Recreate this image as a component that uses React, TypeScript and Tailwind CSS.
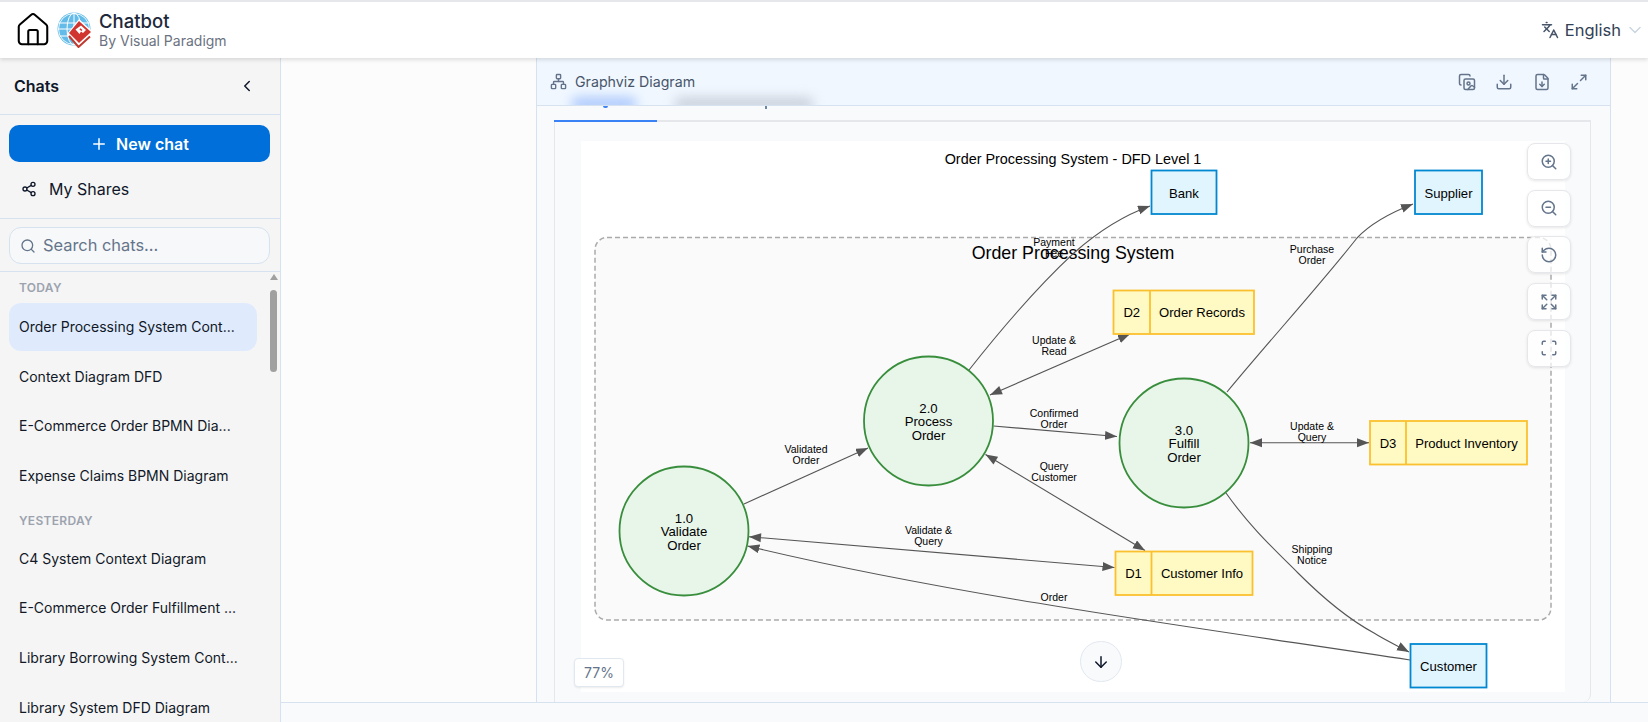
import React from "react";
import {
  ArrowDown,
  ChevronDown,
  ChevronLeft,
  Download,
  Expand,
  FileDown,
  House,
  Languages,
  Maximize2,
  Network,
  Plus,
  RotateCcw,
  Scan,
  Search,
  Share2,
  ZoomIn,
  ZoomOut,
} from "lucide-react";

const todayChats = [
  "Order Processing System Cont...",
  "Context Diagram DFD",
  "E-Commerce Order BPMN Dia...",
  "Expense Claims BPMN Diagram",
];

const yesterdayChats = [
  "C4 System Context Diagram",
  "E-Commerce Order Fulfillment ...",
  "Library Borrowing System Cont...",
  "Library System DFD Diagram",
];

const Logo = () => (
  <svg width="36" height="36" viewBox="0 0 36 36" className="shrink-0">
    <circle cx="17" cy="17" r="16.5" fill="#62bbe8" />
    <g fill="none" stroke="#ffffff" strokeWidth="1">
      <circle cx="17" cy="17" r="15.5" stroke="#e8f6fd" />
      <ellipse cx="17" cy="17" rx="7" ry="16" />
      <path d="M17 1v32M2 11h30M1 17h32M3 24h28" />
    </g>
    <path d="M22 7L36 20L22 37L10 22z" fill="#ffffff" />
    <path d="M12 24L21.500 35L33 24.500" fill="none" stroke="#c0392f" strokeWidth="2" />
    <path d="M22 9L34 20L22 31L12 21z" fill="#d1352f" />
    <path d="M18.500 17.500L24 13.500L29 18L26 21L24 19.500L22.500 22z" fill="#ffffff" />
    <path d="M23.500 16.200L25.500 18L24.300 19L22.300 17.300z" fill="#d1352f" />
  </svg>
);

const ImageCopyIcon = () => (
  <svg width="18" height="18" viewBox="0 0 24 24" fill="none" stroke="currentColor" strokeWidth="2" strokeLinecap="round" strokeLinejoin="round">
    <path d="M4 16a2 2 0 0 1-2-2V4a2 2 0 0 1 2-2h10a2 2 0 0 1 2 2" />
    <rect x="8" y="8" width="14" height="14" rx="2" />
    <circle cx="14" cy="14" r="2" />
    <path d="M22 19l-2.500-2a1.500 1.500 0 0 0-2 0L13 22" />
  </svg>
);

const SideRow = ({ label, active }: { label: string; active?: boolean }) => (
  <div
    className={`mb-[1.7px] flex h-12 items-center rounded-xl px-2.5 text-sm text-[#111827] ${
      active ? "bg-[#dfebfd]" : ""
    }`}
  >
    <span className="truncate">{label}</span>
  </div>
);

const Edge = ({ d, both }: { d: string; both?: boolean }) => (
  <path
    d={d}
    fill="none"
    stroke="#555555"
    strokeWidth="1.1"
    markerEnd="url(#arrow)"
    markerStart={both ? "url(#arrowStart)" : undefined}
  />
);

const Label = ({ x, y, lines, size = 10.5 }: { x: number; y: number; lines: string[]; size?: number }) => (
  <>
    {lines.map((line, i) => (
      <text
        key={i}
        x={x}
        y={y + i * (size > 11 ? 13.500 : 11.700) + size * 0.36}
        textAnchor="middle"
        fontSize={size}
        fill="#000000"
      >
        {line}
      </text>
    ))}
  </>
);

const Circle = ({ cx, cy, lines }: { cx: number; cy: number; lines: string[] }) => (
  <>
    <circle cx={cx} cy={cy} r="64.500" fill="#e8f5e9" stroke="#388e3c" strokeWidth="1.8" />
    <Label x={cx} y={cy - 13} lines={lines} size={13.2} />
  </>
);

const External = ({ x, y, w, label }: { x: number; y: number; w: number; label: string }) => (
  <>
    <rect x={x} y={y} width={w} height="43.500" fill="#e1f5fe" stroke="#0288d1" strokeWidth="1.8" />
    <Label x={x + w / 2} y={y + 22.500} lines={[label]} size={13.1} />
  </>
);

const Store = ({ x, y, w, split, id, label }: { x: number; y: number; w: number; split: number; id: string; label: string }) => (
  <>
    <rect x={x} y={y} width={w} height="43.500" fill="#fff9c4" stroke="#fbc02d" strokeWidth="1.8" />
    <line x1={split} y1={y} x2={split} y2={y + 43.5} stroke="#fbc02d" strokeWidth="1.8" />
    <Label x={(x + split) / 2} y={y + 22} lines={[id]} size={13.1} />
    <Label x={(split + x + w) / 2} y={y + 22} lines={[label]} size={13.1} />
  </>
);

const Diagram = () => (
  <svg
    width="984"
    height="551"
    viewBox="581 141 984 551"
    className="block"
    fontFamily='"Liberation Sans", Arial, sans-serif'
  >
    <defs>
      <marker id="arrow" markerUnits="userSpaceOnUse" markerWidth="13" markerHeight="10" refX="12" refY="4.500" orient="auto">
        <path d="M0 0L12 4.500L0 9z" fill="#555555" />
      </marker>
      <marker id="arrowStart" markerUnits="userSpaceOnUse" markerWidth="13" markerHeight="10" refX="0" refY="4.500" orient="auto">
        <path d="M12 0L0 4.500L12 9z" fill="#555555" />
      </marker>
    </defs>

    <Label x={1073} y={158.500} lines={["Order Processing System - DFD Level 1"]} size={14.4} />
    <rect x="595" y="237.500" width="956" height="382.500" rx="12" fill="#fafafa" stroke="#aaaaaa" strokeWidth="1.5" strokeDasharray="5 3" />
    <Label x={1073} y={253} lines={["Order Processing System"]} size={17.8} />

    <Edge d="M744 504L868 448" />
    <Edge d="M993.500 426L1117 436.500" />
    <Edge both d="M990 395L1130 334" />
    <Edge d="M969 370C1010 318 1050 275 1075 252C1100 230 1125 215 1150 206" />
    <Edge d="M1227 392C1270 340 1320 285 1357 238C1372 222 1395 211 1413 204" />
    <Edge both d="M1250 442.700L1369 442.700" />
    <Edge both d="M985.500 454.500L1145 550.500" />
    <Edge both d="M749 536.700L1114.500 567.500" />
    <Edge d="M1410 660C1200 628 950 595 747.500 546" />
    <Edge d="M1226 493C1250 527 1275 550 1298 573C1325 600 1350 620 1374 633C1385 640 1398 646 1409 652" />

    <Circle cx={684} cy={531} lines={["1.0", "Validate", "Order"]} />
    <Circle cx={928.5} cy={421} lines={["2.0", "Process", "Order"]} />
    <Circle cx={1184} cy={443} lines={["3.0", "Fulfill", "Order"]} />

    <External x={1151.500} y={170.500} w={65} label="Bank" />
    <External x={1415} y={170.500} w={67} label="Supplier" />
    <External x={1410.500} y={644} w={76} label="Customer" />

    <Store x={1113.500} y={290.500} w={140.500} split={1150} id="D2" label="Order Records" />
    <Store x={1370} y={421} w={157} split={1406} id="D3" label="Product Inventory" />
    <Store x={1115.500} y={551.500} w={137} split={1151.500} id="D1" label="Customer Info" />

    <Label x={806} y={449} lines={["Validated", "Order"]} />
    <Label x={928.5} y={530} lines={["Validate &", "Query"]} />
    <Label x={1054} y={242} lines={["Payment", "Fee"]} />
    <Label x={1054} y={340} lines={["Update &", "Read"]} />
    <Label x={1054} y={413} lines={["Confirmed", "Order"]} />
    <Label x={1054} y={466} lines={["Query", "Customer"]} />
    <Label x={1054} y={597} lines={["Order"]} />
    <Label x={1312} y={249} lines={["Purchase", "Order"]} />
    <Label x={1312} y={426} lines={["Update &", "Query"]} />
    <Label x={1312} y={549} lines={["Shipping", "Notice"]} />
  </svg>
);

const zoomTools = [ZoomIn, ZoomOut, RotateCcw, Expand, Scan];

export default function App() {
  return (
    <div className="flex h-[722px] w-[1648px] flex-col overflow-hidden bg-[#fcfcfd] font-['Inter',sans-serif] text-[#0f172a]">
      <header className="relative z-20 flex h-[58px] shrink-0 items-center border-t-2 border-[#e5e7eb] bg-white pl-[15px] pr-[3px] shadow-[0_2px_4px_rgba(0,0,0,0.12)]">
        <House size={38} strokeWidth={1.3} className="-ml-[1px] text-black" />
        <div className="ml-[5px]">
          <Logo />
        </div>
        <div className="ml-[6px] flex flex-col">
          <span className="text-[18.5px] font-medium leading-[22px] text-[#1e293b]">Chatbot</span>
          <span className="text-sm leading-[18px] text-[#6b7280]">By Visual Paradigm</span>
        </div>
        <div className="ml-auto flex items-center text-[#475569]">
          <Languages size={18} />
          <span className="ml-[6px] text-[16.5px] text-[#334155]">English</span>
          <ChevronDown size={20} strokeWidth={1.7} className="ml-[4px] text-[#cbd5e1]" />
        </div>
      </header>

      <div className="flex min-h-0 flex-1">
        <aside className="flex w-[281px] shrink-0 flex-col border-r border-[#d6e2f0] bg-[#f5f5f5]">
          <div className="flex h-[57px] shrink-0 items-center justify-between border-b border-[#d6e2f0] pl-[14px] pr-[24px]">
            <span className="text-base font-semibold">Chats</span>
            <ChevronLeft size={18} />
          </div>
          <div className="flex h-[104px] shrink-0 flex-col border-b border-[#d6e2f0] pl-[9px] pr-[10px] pt-[10px]">
            <button className="flex h-[37px] items-center justify-center gap-2 rounded-[10px] bg-[#006fd9] text-base font-semibold text-white">
              <Plus size={18} />
              New chat
            </button>
            <div className="mt-[9px] flex h-[36px] items-center gap-[12px] pl-[12px] text-base">
              <Share2 size={16} />
              My Shares
            </div>
          </div>
          <div className="h-[53px] shrink-0 border-b border-[#d6e2f0] pl-[9px] pr-[10px] pt-[8px]">
            <div className="flex h-[37px] items-center gap-[7px] rounded-xl border border-[#d6e2f0] bg-[#f7f8f9] px-[10px] text-[16.4px] text-[#64748b]">
              <Search size={16} />
              Search chats...
            </div>
          </div>
          <div className="flex min-h-0 flex-1 overflow-hidden">
            <div className="w-[257px] shrink-0 pl-[9px]">
              <div className="flex h-[31px] items-center pl-[10px] pt-[1px] text-xs font-semibold tracking-wide text-[#9ca3af]">TODAY</div>
              {todayChats.map((chat, i) => (
                <SideRow key={chat} label={chat} active={i === 0} />
              ))}
              <div className="flex h-[33px] items-center pl-[10px] pt-[6px] text-xs font-semibold tracking-wide text-[#9ca3af]">YESTERDAY</div>
              {yesterdayChats.map((chat) => (
                <SideRow key={chat} label={chat} />
              ))}
            </div>
            <div className="ml-[13px] flex w-[7px] shrink-0 flex-col items-center pt-[2px]">
              <div className="h-0 w-0 border-x-[4px] border-b-[6px] border-x-transparent border-b-[#a0a0a0]" />
              <div className="mt-[10px] h-[82px] w-[7px] rounded bg-[#a0a0a0]" />
            </div>
          </div>
        </aside>

        <main className="flex min-w-0 flex-1 flex-col">
          <div className="flex min-h-0 flex-1">
            <div className="w-[255px] shrink-0" />
            <section className="flex w-[1075px] shrink-0 flex-col border-x border-[#d6e2f0] bg-[#f8fafc]">
              <div className="relative flex h-[48px] shrink-0 items-center overflow-hidden border-b border-[#d6e2f0] bg-[#f0f7ff] pl-[13px] pr-[22px]">
                <div className="absolute bottom-[-6px] left-[34px] h-[14px] w-[66px] rounded-full bg-[#93b7fb] opacity-70 blur-[6px]" />
                <div className="absolute bottom-[-6px] left-[137px] h-[14px] w-[140px] rounded-full bg-[#c3c9d3] opacity-80 blur-[6px]" />
                <Network size={17} className="relative text-[#64748b]" />
                <span className="relative ml-[8px] text-[14.2px] text-[#475569]">Graphviz Diagram</span>
                <div className="relative ml-auto flex items-center gap-[19.500px] text-[#64748b]">
                  <ImageCopyIcon />
                  <Download size={18} />
                  <FileDown size={18} />
                  <Maximize2 size={18} />
                </div>
              </div>
              <div className="flex min-h-0 flex-1 flex-col pl-[17px] pr-[19px]">
                <div className="relative h-[16px] shrink-0 border-b-2 border-[#e5e7eb]">
                  <div className="h-[16px] w-[103px] border-b-2 border-[#3b82f6]" />
                  <span className="absolute left-[49px] top-0 h-[2px] w-[5px] rounded-b bg-[#3b82f6]" />
                  <span className="absolute left-[211px] top-0 h-[3px] w-[2px] bg-[#6b87a8]" />
                </div>
                <div className="relative min-h-0 flex-1 rounded-br-lg border-x border-[#e5e7eb] bg-[#f9fafb] pl-[26px] pt-[19px]">
                  <div className="h-[551px] w-[984px] bg-white">
                    <Diagram />
                  </div>
                  <div className="absolute left-[972px] top-[21px] flex flex-col gap-[9.700px]">
                    {zoomTools.map((Icon, i) => (
                      <div
                        key={i}
                        className="flex h-[37px] w-[44px] items-center justify-center rounded-lg border border-[#e5e7eb] bg-white/70 text-[#64748b] shadow-[0_1px_3px_rgba(0,0,0,0.1)]"
                      >
                        <Icon size={18} />
                      </div>
                    ))}
                  </div>
                  <div className="absolute left-[19px] top-[536px] flex h-[29px] w-[50px] items-center justify-center rounded border border-[#e2e8f0] bg-white text-sm text-[#64748b] shadow-[0_1px_2px_rgba(0,0,0,0.08)]">
                    77%
                  </div>
                  <div className="absolute left-[525px] top-[519px] flex h-[41px] w-[42px] items-center justify-center rounded-full border border-[#e2e8f0] bg-[#f8fafc]">
                    <ArrowDown size={18} />
                  </div>
                </div>
              </div>
            </section>
            <div className="flex-1" />
          </div>
          <div className="h-[20px] shrink-0 border-t border-[#d6e2f0] bg-[#f8fafc]" />
        </main>
      </div>
    </div>
  );
}
